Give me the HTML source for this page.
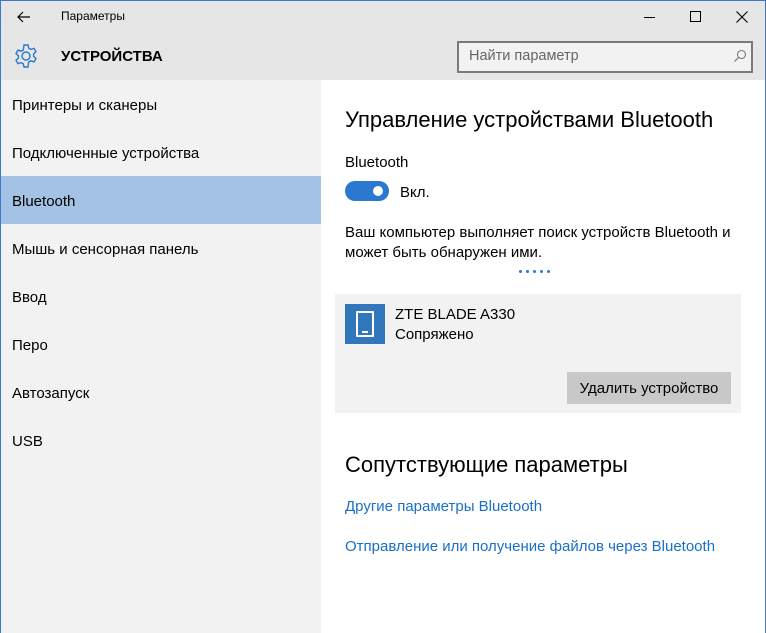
<!DOCTYPE html>
<html><head><meta charset="utf-8"><style>
*{margin:0;padding:0;box-sizing:border-box}
body{width:766px;height:633px;overflow:hidden;font-family:"Liberation Sans",sans-serif;color:#000;background:#fff;position:relative}
.frame{position:absolute;inset:0;border:1px solid #3a7bc8;border-bottom:none}
.top{position:absolute;left:1px;top:1px;width:764px;height:79px;background:#e6e6e6}
.side{position:absolute;left:1px;top:80px;width:320px;height:553px;background:#f2f2f2}
.item{position:absolute;left:11px;font-size:15px;color:#000}
.sel{position:absolute;left:0;top:96px;width:320px;height:48px;background:#a4c2e3}
.abs{position:absolute;white-space:nowrap}
a{color:#1a6fc8;text-decoration:none}
</style></head><body>
<div class="top">
<svg class="abs" style="left:16px;top:9px" width="14" height="14" viewBox="0 0 14 14"><path d="M13 7H1M6 2L1 7l5 5" stroke="#000" fill="none" stroke-width="1.2"/></svg>
<div class="abs" style="left:60px;top:8px;font-size:12px">Параметры</div>
<div class="abs" style="left:643px;top:16px;width:11px;height:1px;background:#000"></div>
<div class="abs" style="left:689px;top:10px;width:11px;height:11px;border:1px solid #000"></div>
<svg class="abs" style="left:735px;top:10px" width="12" height="12"><path d="M0.5 0.5L11.5 11.5M11.5 0.5L0.5 11.5" stroke="#000" stroke-width="1.1"/></svg>
<svg class="abs" style="left:12px;top:42px" width="26" height="26" viewBox="0 0 26 26"><g fill="none" stroke="#2a78d0" stroke-width="1.4"><circle cx="13" cy="13" r="4"/><path d="M11 2h4l.7 3.2 2.2 1.2 3.1-1.1 2 3.4-2.4 2.2v2.4l2.4 2.2-2 3.4-3.1-1.1-2.2 1.2L15 24h-4l-.7-3.2-2.2-1.2-3.1 1.1-2-3.4 2.4-2.2v-2.4L3 10.5l2-3.4 3.1 1.1 2.2-1.2z"/></g></svg>
<div class="abs" style="left:60px;top:47px;font-size:15px;font-weight:bold">УСТРОЙСТВА</div>
<div class="abs" style="left:456px;top:40px;width:296px;height:32px;border:2px solid #7a7a7a;background:#f2f2f2"></div>
<div class="abs" style="left:468px;top:47px;font-size:14.5px;color:#666">Найти параметр</div>
<svg class="abs" style="left:732px;top:48px" width="14" height="14"><circle cx="8.5" cy="5.5" r="4" fill="none" stroke="#777" stroke-width="1.1"/><path d="M5.5 8.5L1.5 12.5" stroke="#777" stroke-width="1.2"/></svg>
</div>
<div class="side">
<div class="sel"></div>
<div class="item" style="top:17px">Принтеры и сканеры</div>
<div class="item" style="top:65px">Подключенные устройства</div>
<div class="item" style="top:113px">Bluetooth</div>
<div class="item" style="top:161px">Мышь и сенсорная панель</div>
<div class="item" style="top:209px">Ввод</div>
<div class="item" style="top:257px">Перо</div>
<div class="item" style="top:305px">Автозапуск</div>
<div class="item" style="top:353px">USB</div>
</div>
<div class="abs" style="left:345px;top:107px;font-size:22px">Управление устройствами Bluetooth</div>
<div class="abs" style="left:345px;top:154px;font-size:15px">Bluetooth</div>
<div class="abs" style="left:345px;top:181px;width:44px;height:20px;border-radius:10px;background:#2a78d0"></div>
<div class="abs" style="left:373px;top:186px;width:10px;height:10px;border-radius:5px;background:#fff"></div>
<div class="abs" style="left:400px;top:184px;font-size:15px">Вкл.</div>
<div class="abs" style="left:345px;top:223px;font-size:15px;line-height:20px">Ваш компьютер выполняет поиск устройств Bluetooth и<br>может быть обнаружен ими.</div>
<div class="abs" style="left:519px;top:270px;font-size:0">
<span style="display:inline-block;width:3px;height:3px;border-radius:2px;background:#2a78d0;margin-right:4px"></span><span style="display:inline-block;width:3px;height:3px;border-radius:2px;background:#2a78d0;margin-right:4px"></span><span style="display:inline-block;width:3px;height:3px;border-radius:2px;background:#2a78d0;margin-right:4px"></span><span style="display:inline-block;width:3px;height:3px;border-radius:2px;background:#2a78d0;margin-right:4px"></span><span style="display:inline-block;width:3px;height:3px;border-radius:2px;background:#2a78d0"></span></div>
<div class="abs" style="left:335px;top:294px;width:406px;height:119px;background:#f2f2f2"></div>
<div class="abs" style="left:345px;top:304px;width:40px;height:40px;background:#3277bc"></div>
<div class="abs" style="left:356px;top:311px;width:18px;height:26px;border:2px solid #fff;border-radius:1px"></div>
<div class="abs" style="left:362px;top:331px;width:6px;height:2px;background:#fff"></div>
<div class="abs" style="left:395px;top:306px;font-size:15px">ZTE BLADE A330</div>
<div class="abs" style="left:395px;top:326px;font-size:15px">Сопряжено</div>
<div class="abs" style="left:567px;top:372px;width:164px;height:32px;background:#c8c8c8"></div>
<div class="abs" style="left:567px;top:380px;width:164px;text-align:center;font-size:15px">Удалить устройство</div>
<div class="abs" style="left:345px;top:452px;font-size:22px">Сопутствующие параметры</div>
<div class="abs" style="left:345px;top:498px;font-size:15px"><a>Другие параметры Bluetooth</a></div>
<div class="abs" style="left:345px;top:538px;font-size:15px"><a>Отправление или получение файлов через Bluetooth</a></div>
<div class="frame"></div>
</body></html>
